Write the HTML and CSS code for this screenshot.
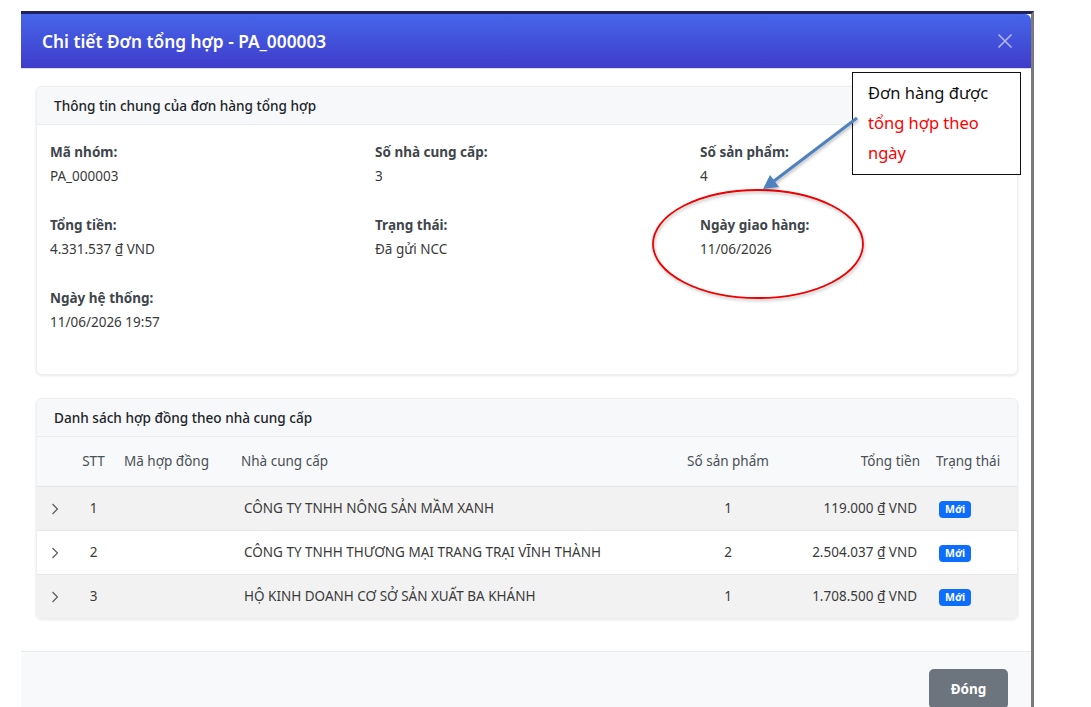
FILE: index.html
```html
<!DOCTYPE html>
<html lang="vi">
<head>
<meta charset="utf-8">
<title>Chi tiết Đơn tổng hợp</title>
<link rel="stylesheet" href="styles.css">
</head>
<body>
<div class="frame">
  <div class="modal">
    <div class="modal-header">
      <h5 class="modal-title">Chi tiết Đơn tổng hợp - PA_000003</h5>
      <button class="btn-close" aria-label="Close">
        <svg viewBox="0 0 16 16" width="16" height="16"><path d="M1.5 1.5L14.5 14.5M14.5 1.5L1.5 14.5" stroke="currentColor" stroke-width="1.6" fill="none"/></svg>
      </button>
    </div>
    <div class="modal-body">
      <section class="card">
        <div class="card-header">Thông tin chung của đơn hàng tổng hợp</div>
        <div class="card-body info-grid">
          <div class="field"><div class="label">Mã nhóm:</div><div class="value">PA_000003</div></div>
          <div class="field"><div class="label">Số nhà cung cấp:</div><div class="value">3</div></div>
          <div class="field"><div class="label">Số sản phẩm:</div><div class="value">4</div></div>
          <div class="field"><div class="label">Tổng tiền:</div><div class="value">4.331.537 ₫ VND</div></div>
          <div class="field"><div class="label">Trạng thái:</div><div class="value">Đã gửi NCC</div></div>
          <div class="field"><div class="label">Ngày giao hàng:</div><div class="value">11/06/2026</div></div>
          <div class="field"><div class="label">Ngày hệ thống:</div><div class="value">11/06/2026 19:57</div></div>
        </div>
      </section>
      <section class="card list-card">
        <div class="card-header">Danh sách hợp đồng theo nhà cung cấp</div>
        <table class="table">
          <colgroup>
            <col class="c-exp"><col class="c-stt"><col class="c-code"><col class="c-name"><col class="c-qty"><col class="c-total"><col class="c-status">
          </colgroup>
          <thead>
            <tr>
              <th></th>
              <th class="center">STT</th>
              <th>Mã hợp đồng</th>
              <th>Nhà cung cấp</th>
              <th class="center">Số sản phẩm</th>
              <th class="right">Tổng tiền</th>
              <th>Trạng thái</th>
            </tr>
          </thead>
          <tbody>
            <tr class="odd">
              <td class="exp"><svg viewBox="0 0 8 12" width="8" height="12"><path d="M1.5 1L6.5 6L1.5 11" stroke="#555" stroke-width="1.1" fill="none"/></svg></td>
              <td class="center">1</td>
              <td></td>
              <td class="name">CÔNG TY TNHH NÔNG SẢN MẦM XANH</td>
              <td class="center">1</td>
              <td class="right money">119.000 ₫ VND</td>
              <td class="status"><span class="badge">Mới</span></td>
            </tr>
            <tr>
              <td class="exp"><svg viewBox="0 0 8 12" width="8" height="12"><path d="M1.5 1L6.5 6L1.5 11" stroke="#555" stroke-width="1.1" fill="none"/></svg></td>
              <td class="center">2</td>
              <td></td>
              <td class="name">CÔNG TY TNHH THƯƠNG MẠI TRANG TRẠI VĨNH THÀNH</td>
              <td class="center">2</td>
              <td class="right money">2.504.037 ₫ VND</td>
              <td class="status"><span class="badge">Mới</span></td>
            </tr>
            <tr class="odd">
              <td class="exp"><svg viewBox="0 0 8 12" width="8" height="12"><path d="M1.5 1L6.5 6L1.5 11" stroke="#555" stroke-width="1.1" fill="none"/></svg></td>
              <td class="center">3</td>
              <td></td>
              <td class="name">HỘ KINH DOANH CƠ SỞ SẢN XUẤT BA KHÁNH</td>
              <td class="center">1</td>
              <td class="right money">1.708.500 ₫ VND</td>
              <td class="status"><span class="badge">Mới</span></td>
            </tr>
          </tbody>
        </table>
      </section>
    </div>
    <div class="modal-footer">
      <button class="btn-secondary">Đóng</button>
    </div>
  </div>
</div>

<div class="callout">
  <div class="callout-line">Đơn hàng được</div>
  <div class="callout-line red">tổng hợp theo</div>
  <div class="callout-line red">ngày</div>
</div>

<svg class="annot" viewBox="0 0 1091 707" width="1091" height="707">
  <defs>
    <filter id="sh" x="-10%" y="-10%" width="120%" height="130%">
      <feDropShadow dx="1" dy="2" stdDeviation="1.5" flood-color="#000" flood-opacity="0.25"/>
    </filter>
  </defs>
  <ellipse cx="758" cy="244" rx="105" ry="54" fill="none" stroke="#f00000" stroke-width="1.8" filter="url(#sh)"/>
  <g filter="url(#sh)">
    <line x1="857" y1="118" x2="774" y2="181" stroke="#4f81bd" stroke-width="3"/>
    <polygon points="763,189 770,175 779,187" fill="#4f81bd"/>
  </g>
</svg>
</body>
</html>
```

FILE: styles.css
```css
* { box-sizing: border-box; }

html, body {
  margin: 0;
  padding: 0;
  background: #ffffff;
  overflow: hidden;
}

body {
  font-family: "Noto Sans", "Open Sans", sans-serif;
  color: #333;
  width: 1091px;
  height: 707px;
  position: relative;
}

.frame {
  margin: 11px 0 0 21px;
  width: 1013px;
  height: 696px;
  border-top: 3px solid #1c2263;
  border-right: 3px solid #7b7b7b;
  overflow: hidden;
}

.modal {
  background: #fff;
  height: 100%;
  display: flex;
  flex-direction: column;
}

.modal-header {
  height: 55px;
  flex: none;
  display: flex;
  align-items: center;
  justify-content: space-between;
  padding: 0 17px 0 21px;
  background: linear-gradient(180deg, #4666ea 0%, #3f3cca 100%);
  border-top-right-radius: 6px;
  border-bottom: 1px solid #d9dcf4;
}

.modal-title {
  margin: 0;
  font-size: 17.3px;
  font-weight: 600;
  color: #ffffff;
}

.btn-close {
  border: 0;
  background: transparent;
  padding: 0;
  width: 18px;
  height: 18px;
  color: #b3b7f0;
  display: flex;
  align-items: center;
  justify-content: center;
}

.modal-body {
  padding: 17px 13px 32px 15px;
  flex: none;
}

.card {
  background: #fff;
  border: 1px solid #eceef0;
  border-radius: 6px;
  box-shadow: 0 1px 3px rgba(0, 0, 0, 0.09);
  overflow: hidden;
}

.list-card { margin-top: 23px; }

.card-header {
  background: #f7f8fa;
  border-bottom: 1px solid #eaecef;
  padding: 8px 17px;
  font-size: 13.6px;
  line-height: 21px;
  font-weight: 500;
  color: #212529;
}

.info-grid {
  display: grid;
  grid-template-columns: 325px 325px 1fr;
  padding: 16px 13px 14px;
}

.field { margin-bottom: 27px; }

.label {
  font-size: 13.5px;
  line-height: 22px;
  font-weight: 700;
  color: #40464c;
}

.value {
  margin-top: 2px;
  font-size: 13.5px;
  line-height: 22px;
  color: #3a3a3a;
}

.table {
  width: 100%;
  border-collapse: collapse;
  table-layout: fixed;
  font-size: 13.5px;
}

.c-exp { width: 34px; }
.c-stt { width: 45px; }
.c-code { width: 117px; }
.c-name { width: 439px; }
.c-qty { width: 112px; }
.c-total { width: 144px; }
.c-status { width: auto; }

.table th {
  background: #f8f9fa;
  font-weight: 400;
  color: #495057;
  text-align: left;
  padding: 14px 8px;
  line-height: 21px;
  border-bottom: 1px solid #e3e5e8;
  white-space: nowrap;
}

.table td {
  padding: 11px 8px;
  line-height: 21px;
  color: #3a3a3a;
  border-bottom: 1px solid #e6e6e6;
  white-space: nowrap;
}

.table tbody tr:last-child td { border-bottom: 0; }

.table tr.odd td { background: #f2f2f2; }

.table .center { text-align: center; }
.table .right { text-align: right; }
.table td.name { padding-left: 11px; }
.table td.money { padding-right: 11px; }
.table td.exp { padding: 11px 0 11px 14px; }
.table td.exp svg { display: block; }
.table td.status { padding-left: 11px; }

.badge {
  display: inline-block;
  background: #0d6efd;
  color: #fff;
  font-size: 10.5px;
  font-weight: 700;
  line-height: 13px;
  padding: 2px 6px;
  border-radius: 4px;
  vertical-align: middle;
}

.modal-footer {
  flex: 1;
  background: #f8f9fa;
  border-top: 1px solid #e9ecef;
  display: flex;
  justify-content: flex-end;
  align-items: flex-start;
  padding: 17px 23px;
}

.btn-secondary {
  border: 0;
  background: #6c757d;
  color: #fff;
  font-family: "Noto Sans", sans-serif;
  font-size: 13.5px;
  font-weight: 700;
  width: 79px;
  height: 40px;
  border-radius: 5px;
  padding: 0;
}

.callout {
  position: absolute;
  left: 852px;
  top: 72px;
  width: 169px;
  height: 103px;
  background: #fff;
  border: 1px solid #111;
  padding: 5px 0 0 15px;
  font-family: "Noto Sans", sans-serif;
  font-size: 16.5px;
  line-height: 30px;
  color: #111;
}

.callout-line.red { color: #ff0000; }

.annot {
  position: absolute;
  left: 0;
  top: 0;
  pointer-events: none;
}
```
